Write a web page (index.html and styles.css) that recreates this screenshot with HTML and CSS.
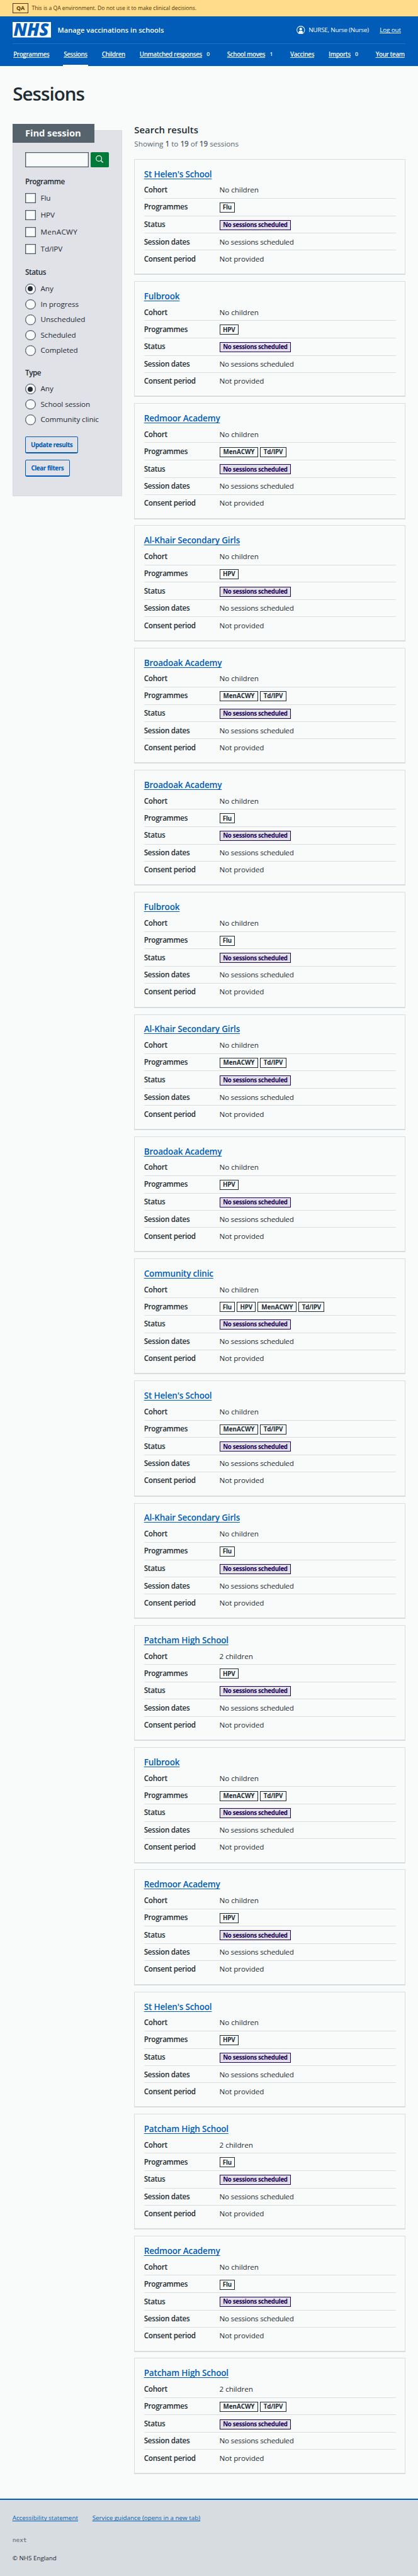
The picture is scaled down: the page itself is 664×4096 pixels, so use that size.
FILE: index.html
```html
<!DOCTYPE html>
<html lang="en">
<head>
<meta charset="utf-8">
<title>Sessions – Manage vaccinations in schools</title>
<link rel="stylesheet" href="styles.css">
</head>
<body>
<div class="env-banner"><strong class="env-tag">QA</strong><span>This is a QA environment. Do not use it to make clinical decisions.</span></div>
<header class="header">
  <div class="header-top">
    <svg class="logo" viewBox="0 0 100 40" role="img" aria-label="NHS"><rect width="100" height="40" fill="#f9fbfa"/><text class="logo-text" x="2.5" y="36" textLength="91" lengthAdjust="spacingAndGlyphs">NHS</text></svg>
    <span class="service-name">Manage vaccinations in schools</span>
    <div class="account">
      <svg class="account-icon" viewBox="0 0 22 22"><circle cx="11" cy="11" r="10" fill="none" stroke="#f9fbfa" stroke-width="1.7"/><circle cx="11" cy="8.4" r="3.5" fill="#f9fbfa"/><path d="M5.6 18.9V16.6a4 4 0 0 1 4-3.9h2.8a4 4 0 0 1 4 3.9v2.3a10 10 0 0 1-10.8 0z" fill="#f9fbfa"/></svg>
      <span class="account-name">NURSE, Nurse (Nurse)</span>
      <a class="logout" href="#">Log out</a>
    </div>
  </div>
  <nav class="nav">
    <div class="nav-item"><a href="#">Programmes</a></div>
    <div class="nav-item current"><a href="#">Sessions</a></div>
    <div class="nav-item"><a href="#">Children</a></div>
    <div class="nav-item"><a href="#">Unmatched responses</a><span class="count">0</span></div>
    <div class="nav-item"><a href="#">School moves</a><span class="count">1</span></div>
    <div class="nav-item"><a href="#">Vaccines</a></div>
    <div class="nav-item"><a href="#">Imports</a><span class="count">0</span></div>
    <div class="nav-item"><a href="#">Your team</a></div>
  </nav>
</header>
<main class="main">
  <h1 class="page-title">Sessions</h1>
  <div class="columns">
    <form class="filters">
      <h2 class="filters-title">Find session</h2>
      <div class="search"><input class="search-input" type="text" aria-label="Search"><button class="search-button" type="button" aria-label="Search"><svg class="search-icon" viewBox="0 0 20 20"><circle cx="8.3" cy="8.2" r="7.2" fill="none" stroke="#f9fbfa" stroke-width="2"/><path d="M13.4 13.3l5.6 5.5" stroke="#f9fbfa" stroke-width="2.4"/></svg></button></div>
      <div class="legend legend-programme">Programme</div>
      <div class="options checkboxes">
        <label class="option"><span class="box"></span>Flu</label>
        <label class="option"><span class="box"></span>HPV</label>
        <label class="option caps"><span class="box"></span>MenACWY</label>
        <label class="option"><span class="box"></span>Td/IPV</label>
      </div>
      <div class="legend legend-status">Status</div>
      <div class="options radios">
        <label class="option"><span class="box checked"></span>Any</label>
        <label class="option"><span class="box"></span>In progress</label>
        <label class="option"><span class="box"></span>Unscheduled</label>
        <label class="option"><span class="box"></span>Scheduled</label>
        <label class="option"><span class="box"></span>Completed</label>
      </div>
      <div class="legend legend-type">Type</div>
      <div class="options radios">
        <label class="option"><span class="box checked"></span>Any</label>
        <label class="option"><span class="box"></span>School session</label>
        <label class="option"><span class="box"></span>Community clinic</label>
      </div>
      <div class="actions">
        <button class="button update" type="button">Update results</button>
        <button class="button clear" type="button">Clear filters</button>
      </div>
    </form>
    <section class="results">
      <h2 class="results-title">Search results</h2>
      <p class="results-count">Showing <b>1</b> to <b>19</b> of <b>19</b> sessions</p>
      <div class="cards">
        <article class="card"><h3 class="card-title"><a href="#">St Helen's School</a></h3><dl>
          <div class="row"><dt>Cohort</dt><dd>No children</dd></div>
          <div class="row tags"><dt>Programmes</dt><dd><span class="tag flu">Flu</span></dd></div>
          <div class="row tags"><dt>Status</dt><dd><span class="tag none">No sessions scheduled</span></dd></div>
          <div class="row dates"><dt>Session dates</dt><dd>No sessions scheduled</dd></div>
          <div class="row"><dt>Consent period</dt><dd>Not provided</dd></div></dl></article>
        <article class="card"><h3 class="card-title"><a href="#">Fulbrook</a></h3><dl>
          <div class="row"><dt>Cohort</dt><dd>No children</dd></div>
          <div class="row tags"><dt>Programmes</dt><dd><span class="tag hpv">HPV</span></dd></div>
          <div class="row tags"><dt>Status</dt><dd><span class="tag none">No sessions scheduled</span></dd></div>
          <div class="row dates"><dt>Session dates</dt><dd>No sessions scheduled</dd></div>
          <div class="row"><dt>Consent period</dt><dd>Not provided</dd></div></dl></article>
        <article class="card"><h3 class="card-title"><a href="#">Redmoor Academy</a></h3><dl>
          <div class="row"><dt>Cohort</dt><dd>No children</dd></div>
          <div class="row tags"><dt>Programmes</dt><dd><span class="tag acwy">MenACWY</span><span class="tag ipv">Td/IPV</span></dd></div>
          <div class="row tags"><dt>Status</dt><dd><span class="tag none">No sessions scheduled</span></dd></div>
          <div class="row dates"><dt>Session dates</dt><dd>No sessions scheduled</dd></div>
          <div class="row"><dt>Consent period</dt><dd>Not provided</dd></div></dl></article>
        <article class="card"><h3 class="card-title"><a href="#">Al-Khair Secondary Girls</a></h3><dl>
          <div class="row"><dt>Cohort</dt><dd>No children</dd></div>
          <div class="row tags"><dt>Programmes</dt><dd><span class="tag hpv">HPV</span></dd></div>
          <div class="row tags"><dt>Status</dt><dd><span class="tag none">No sessions scheduled</span></dd></div>
          <div class="row dates"><dt>Session dates</dt><dd>No sessions scheduled</dd></div>
          <div class="row"><dt>Consent period</dt><dd>Not provided</dd></div></dl></article>
        <article class="card"><h3 class="card-title"><a href="#">Broadoak Academy</a></h3><dl>
          <div class="row"><dt>Cohort</dt><dd>No children</dd></div>
          <div class="row tags"><dt>Programmes</dt><dd><span class="tag acwy">MenACWY</span><span class="tag ipv">Td/IPV</span></dd></div>
          <div class="row tags"><dt>Status</dt><dd><span class="tag none">No sessions scheduled</span></dd></div>
          <div class="row dates"><dt>Session dates</dt><dd>No sessions scheduled</dd></div>
          <div class="row"><dt>Consent period</dt><dd>Not provided</dd></div></dl></article>
        <article class="card"><h3 class="card-title"><a href="#">Broadoak Academy</a></h3><dl>
          <div class="row"><dt>Cohort</dt><dd>No children</dd></div>
          <div class="row tags"><dt>Programmes</dt><dd><span class="tag flu">Flu</span></dd></div>
          <div class="row tags"><dt>Status</dt><dd><span class="tag none">No sessions scheduled</span></dd></div>
          <div class="row dates"><dt>Session dates</dt><dd>No sessions scheduled</dd></div>
          <div class="row"><dt>Consent period</dt><dd>Not provided</dd></div></dl></article>
        <article class="card"><h3 class="card-title"><a href="#">Fulbrook</a></h3><dl>
          <div class="row"><dt>Cohort</dt><dd>No children</dd></div>
          <div class="row tags"><dt>Programmes</dt><dd><span class="tag flu">Flu</span></dd></div>
          <div class="row tags"><dt>Status</dt><dd><span class="tag none">No sessions scheduled</span></dd></div>
          <div class="row dates"><dt>Session dates</dt><dd>No sessions scheduled</dd></div>
          <div class="row"><dt>Consent period</dt><dd>Not provided</dd></div></dl></article>
        <article class="card"><h3 class="card-title"><a href="#">Al-Khair Secondary Girls</a></h3><dl>
          <div class="row"><dt>Cohort</dt><dd>No children</dd></div>
          <div class="row tags"><dt>Programmes</dt><dd><span class="tag acwy">MenACWY</span><span class="tag ipv">Td/IPV</span></dd></div>
          <div class="row tags"><dt>Status</dt><dd><span class="tag none">No sessions scheduled</span></dd></div>
          <div class="row dates"><dt>Session dates</dt><dd>No sessions scheduled</dd></div>
          <div class="row"><dt>Consent period</dt><dd>Not provided</dd></div></dl></article>
        <article class="card"><h3 class="card-title"><a href="#">Broadoak Academy</a></h3><dl>
          <div class="row"><dt>Cohort</dt><dd>No children</dd></div>
          <div class="row tags"><dt>Programmes</dt><dd><span class="tag hpv">HPV</span></dd></div>
          <div class="row tags"><dt>Status</dt><dd><span class="tag none">No sessions scheduled</span></dd></div>
          <div class="row dates"><dt>Session dates</dt><dd>No sessions scheduled</dd></div>
          <div class="row"><dt>Consent period</dt><dd>Not provided</dd></div></dl></article>
        <article class="card"><h3 class="card-title"><a href="#">Community clinic</a></h3><dl>
          <div class="row"><dt>Cohort</dt><dd>No children</dd></div>
          <div class="row tags"><dt>Programmes</dt><dd><span class="tag flu">Flu</span><span class="tag hpv">HPV</span><span class="tag acwy">MenACWY</span><span class="tag ipv">Td/IPV</span></dd></div>
          <div class="row tags"><dt>Status</dt><dd><span class="tag none">No sessions scheduled</span></dd></div>
          <div class="row dates"><dt>Session dates</dt><dd>No sessions scheduled</dd></div>
          <div class="row"><dt>Consent period</dt><dd>Not provided</dd></div></dl></article>
        <article class="card"><h3 class="card-title"><a href="#">St Helen's School</a></h3><dl>
          <div class="row"><dt>Cohort</dt><dd>No children</dd></div>
          <div class="row tags"><dt>Programmes</dt><dd><span class="tag acwy">MenACWY</span><span class="tag ipv">Td/IPV</span></dd></div>
          <div class="row tags"><dt>Status</dt><dd><span class="tag none">No sessions scheduled</span></dd></div>
          <div class="row dates"><dt>Session dates</dt><dd>No sessions scheduled</dd></div>
          <div class="row"><dt>Consent period</dt><dd>Not provided</dd></div></dl></article>
        <article class="card"><h3 class="card-title"><a href="#">Al-Khair Secondary Girls</a></h3><dl>
          <div class="row"><dt>Cohort</dt><dd>No children</dd></div>
          <div class="row tags"><dt>Programmes</dt><dd><span class="tag flu">Flu</span></dd></div>
          <div class="row tags"><dt>Status</dt><dd><span class="tag none">No sessions scheduled</span></dd></div>
          <div class="row dates"><dt>Session dates</dt><dd>No sessions scheduled</dd></div>
          <div class="row"><dt>Consent period</dt><dd>Not provided</dd></div></dl></article>
        <article class="card"><h3 class="card-title"><a href="#">Patcham High School</a></h3><dl>
          <div class="row"><dt>Cohort</dt><dd>2 children</dd></div>
          <div class="row tags"><dt>Programmes</dt><dd><span class="tag hpv">HPV</span></dd></div>
          <div class="row tags"><dt>Status</dt><dd><span class="tag none">No sessions scheduled</span></dd></div>
          <div class="row dates"><dt>Session dates</dt><dd>No sessions scheduled</dd></div>
          <div class="row"><dt>Consent period</dt><dd>Not provided</dd></div></dl></article>
        <article class="card"><h3 class="card-title"><a href="#">Fulbrook</a></h3><dl>
          <div class="row"><dt>Cohort</dt><dd>No children</dd></div>
          <div class="row tags"><dt>Programmes</dt><dd><span class="tag acwy">MenACWY</span><span class="tag ipv">Td/IPV</span></dd></div>
          <div class="row tags"><dt>Status</dt><dd><span class="tag none">No sessions scheduled</span></dd></div>
          <div class="row dates"><dt>Session dates</dt><dd>No sessions scheduled</dd></div>
          <div class="row"><dt>Consent period</dt><dd>Not provided</dd></div></dl></article>
        <article class="card"><h3 class="card-title"><a href="#">Redmoor Academy</a></h3><dl>
          <div class="row"><dt>Cohort</dt><dd>No children</dd></div>
          <div class="row tags"><dt>Programmes</dt><dd><span class="tag hpv">HPV</span></dd></div>
          <div class="row tags"><dt>Status</dt><dd><span class="tag none">No sessions scheduled</span></dd></div>
          <div class="row dates"><dt>Session dates</dt><dd>No sessions scheduled</dd></div>
          <div class="row"><dt>Consent period</dt><dd>Not provided</dd></div></dl></article>
        <article class="card"><h3 class="card-title"><a href="#">St Helen's School</a></h3><dl>
          <div class="row"><dt>Cohort</dt><dd>No children</dd></div>
          <div class="row tags"><dt>Programmes</dt><dd><span class="tag hpv">HPV</span></dd></div>
          <div class="row tags"><dt>Status</dt><dd><span class="tag none">No sessions scheduled</span></dd></div>
          <div class="row dates"><dt>Session dates</dt><dd>No sessions scheduled</dd></div>
          <div class="row"><dt>Consent period</dt><dd>Not provided</dd></div></dl></article>
        <article class="card"><h3 class="card-title"><a href="#">Patcham High School</a></h3><dl>
          <div class="row"><dt>Cohort</dt><dd>2 children</dd></div>
          <div class="row tags"><dt>Programmes</dt><dd><span class="tag flu">Flu</span></dd></div>
          <div class="row tags"><dt>Status</dt><dd><span class="tag none">No sessions scheduled</span></dd></div>
          <div class="row dates"><dt>Session dates</dt><dd>No sessions scheduled</dd></div>
          <div class="row"><dt>Consent period</dt><dd>Not provided</dd></div></dl></article>
        <article class="card"><h3 class="card-title"><a href="#">Redmoor Academy</a></h3><dl>
          <div class="row"><dt>Cohort</dt><dd>No children</dd></div>
          <div class="row tags"><dt>Programmes</dt><dd><span class="tag flu">Flu</span></dd></div>
          <div class="row tags"><dt>Status</dt><dd><span class="tag none">No sessions scheduled</span></dd></div>
          <div class="row dates"><dt>Session dates</dt><dd>No sessions scheduled</dd></div>
          <div class="row"><dt>Consent period</dt><dd>Not provided</dd></div></dl></article>
        <article class="card"><h3 class="card-title"><a href="#">Patcham High School</a></h3><dl>
          <div class="row"><dt>Cohort</dt><dd>2 children</dd></div>
          <div class="row tags"><dt>Programmes</dt><dd><span class="tag acwy">MenACWY</span><span class="tag ipv">Td/IPV</span></dd></div>
          <div class="row tags"><dt>Status</dt><dd><span class="tag none">No sessions scheduled</span></dd></div>
          <div class="row dates"><dt>Session dates</dt><dd>No sessions scheduled</dd></div>
          <div class="row"><dt>Consent period</dt><dd>Not provided</dd></div></dl></article>
      </div>
    </section>
  </div>
</main>
<footer class="footer">
  <div class="footer-links"><a href="#">Accessibility statement</a><a href="#">Service guidance (opens in a new tab)</a></div>
  <div class="release">next</div>
  <div class="copyright">© NHS England</div>
</footer>
</body>
</html>
```
FILE: styles.css
```css
/* 1rem is ten design pixels on a 1080-wide layout */
html { font-size: 6.1481px; }
*, *::before, *::after { box-sizing: border-box; }
body {
  margin: 0; min-height: 100vh; display: flex; flex-direction: column;
  background: #f9fbfa; color: #212b32;
  font-family: "Open Sans", "Noto Sans", sans-serif; font-size: 1.9rem; letter-spacing: -.006em;
}
h1, h2, h3, p, dl, dd { margin: 0; }
a { text-underline-offset: .12em; text-decoration-thickness: 1px; text-decoration-skip-ink: none; }

.env-banner {
  height: 4.2rem; padding: 0 3.2rem; display: flex; align-items: center; gap: .8rem;
  background: #ffdb8c; color: #4d3803; font-size: 1.4rem; letter-spacing: .001em; white-space: nowrap;
}
.env-tag {
  width: 4.2rem; height: 2.6rem; border: 1px solid #4d3803; line-height: 2rem;
  display: flex; align-items: center; justify-content: center; font-size: 1.45rem; font-weight: 700;
}

.header { height: 12.8rem; padding: 0 3.2rem; background: #005cb6; color: #f9fbfa; }
.header a { color: inherit; }
.header-top { height: 7.2rem; display: flex; align-items: center; border-bottom: 1px solid #2674c1; }
.logo { width: 10rem; height: 4rem; display: block; }
.logo-text { font: italic 800 45px "Open Sans", sans-serif; letter-spacing: 0; fill: #005cb6; }
.service-name { margin-left: 1.7rem; font-size: 1.8rem; font-weight: 600; letter-spacing: .004em; white-space: nowrap; }
.account { margin-left: auto; padding-right: 1.2rem; display: flex; align-items: center; font-size: 1.6rem; font-weight: 500; letter-spacing: -.022em; white-space: nowrap; }
.account-icon { width: 2.2rem; height: 2.2rem; }
.account-name { width: 15.8rem; margin: 0 2.6rem 0 .9rem; }
.logout { letter-spacing: -.01em; }
.nav { height: 5.6rem; display: flex; justify-content: space-between; font-size: 1.6rem; font-weight: 600; letter-spacing: -.038em; white-space: nowrap; }
.nav-item { padding: 0 .25rem; display: flex; align-items: center; line-height: 2.4rem; border-bottom: .4rem solid transparent; border-top: .25rem solid transparent; }
.nav-item.current { border-bottom-color: #f9fbfa; }
.count { width: 2.4rem; margin-left: .35rem; text-align: center; font-size: 1.4rem; }

.main { padding: 4.44rem 3.2rem 6.4rem; }
.page-title { height: 5.6rem; margin-bottom: 5.06rem; font-size: 4.8rem; line-height: 5.6rem; font-weight: 600; letter-spacing: -.032em; padding-left: .1rem; }
.columns { display: flex; align-items: flex-start; gap: 3.2rem; }

.filters { width: 28.3rem; height: 94.7rem; margin-top: 1.5rem; padding-left: calc(3.3rem - 1px); background: #e1e1e8; border: 1px solid #d6dae0; }
.filters-title { width: 21.2rem; height: 4.8rem; margin: calc(-1.5rem - 1px) 0 2.4rem -3.3rem; padding-left: 3.3rem; background: #56626c; color: #f9fbfa; font-size: 2.4rem; line-height: 4.8rem; font-weight: 700; letter-spacing: -.004em; }
.search { display: flex; gap: .4rem; }
.search-input { width: 16.5rem; height: 4rem; padding: 0; border: 1px solid #4c5a66; border-radius: 0; background: #f9fbfa; box-shadow: inset 0 0 0 .3px #4c5a66; }
.search-button { width: 4.8rem; height: 4rem; padding: 0 0 .3rem; border: 0; border-radius: .3rem; background: #007a39; display: flex; align-items: center; justify-content: center; }
.search-icon { width: 2rem; height: 2rem; }
.legend { height: 2.8rem; line-height: 2.8rem; font-weight: 600; letter-spacing: -.035em; margin-bottom: 1.54rem; }
.legend-programme { margin-top: 2.26rem; }
.legend-status { margin-top: 3.26rem; }
.legend-type { margin-top: 2.96rem; margin-bottom: 1.44rem; }
.options { display: flex; flex-direction: column; }
.checkboxes { gap: 1.7rem; }
.radios { gap: 1.3rem; }
.option { height: 2.7rem; line-height: 2.7rem; display: flex; gap: 1.3rem; }
.option.caps { letter-spacing: .028em; }
.box { width: 2.7rem; height: 2.7rem; border: 1px solid #4c5a66; background: #f9fbfa; box-shadow: inset 0 0 0 .3px #4c5a66; display: flex; align-items: center; justify-content: center; }
.radios .box { border-radius: 50%; }
.checked::after { content: ""; width: 1.3rem; height: 1.3rem; border-radius: 50%; background: #212b32; }
.actions { margin-top: 3rem; display: flex; flex-direction: column; gap: 1.6rem; }
.button { height: 4.4rem; padding: 0; border: 1px solid #005cb6; border-bottom-width: .4rem; border-radius: .4rem; background: #e1e1e8; color: #005cb6; font: 700 1.6rem "Open Sans", sans-serif; letter-spacing: -.043em; white-space: nowrap; }
.update { width: 13.7rem; }
.clear { width: 11.5rem; }

.results { width: 70.1rem; }
.results-title { margin: -.1rem 0 .66rem; font-size: 2.4rem; line-height: 3.2rem; font-weight: 600; letter-spacing: .005em; }
.results-count { margin-bottom: 2.44rem; line-height: 2.8rem; color: #56626c; letter-spacing: 0; }
.results-count b { font-weight: 600; }
.cards { display: flex; flex-direction: column; gap: 1.6rem; }
.card { height: 30rem; padding: calc(2.58rem - 1px) calc(2.5rem - 1px) 0; border: 1px solid #dadee1; border-bottom: .4rem solid #d6dce0; }
.card-title { margin-bottom: .62rem; font-size: 2.2rem; line-height: 2.7rem; font-weight: 600; letter-spacing: -.013em; }
.card-title a { color: #005cb6; }
.row { height: 4.4rem; padding-top: .88rem; display: flex; line-height: 2.5rem; border-bottom: 1px solid #dadee1; }
.row:last-child { border-bottom: 0; }
.row.tags { height: 4.5rem; }
dt { width: 19.5rem; font-weight: 600; letter-spacing: -.024em; }
.dates dd { letter-spacing: -.023em; }
.tags dd { display: flex; gap: .5rem; padding-top: .12rem; }
.tag { height: 2.6rem; border: 1px solid #212b32; display: flex; align-items: center; justify-content: center; font-size: 1.6rem; line-height: 2.2rem; font-weight: 700; letter-spacing: -.025em; white-space: nowrap; }
.flu { width: 4rem; }
.hpv { width: 4.9rem; }
.acwy { width: 10.05rem; letter-spacing: -.002em; }
.ipv { width: 6.7rem; }
.none { width: 18.5rem; border-color: #210055; background: #e1e1e8; color: #210055; letter-spacing: -.036em; }

.footer { flex: 1; padding: 3.38rem 3.2rem 0; border-top: .4rem solid #005cb6; background: #d7dce0; font-size: 1.6rem; line-height: 2.4rem; letter-spacing: 0; }
.footer-links { display: flex; gap: 3.7rem; }
.footer-links a { color: #005cb6; }
.release { margin-top: 3.39rem; color: #56626c; font-family: "DejaVu Sans Mono", monospace; font-size: 1.55rem; }
.copyright { margin-top: 2.21rem; }
```
